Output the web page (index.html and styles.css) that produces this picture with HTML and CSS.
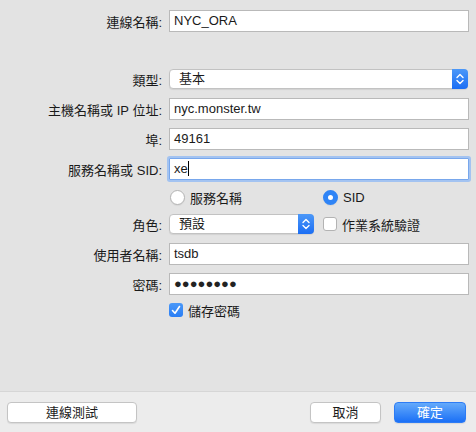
FILE: index.html
```html
<!DOCTYPE html>
<html lang="zh-Hant">
<head>
<meta charset="UTF-8">
<meta name="viewport" content="width=device-width, initial-scale=1.0">
<title>連線設定</title>
<link rel="stylesheet" href="styles.css">
</head>
<body>

<div class="dialog">
    <div class="form">
        <div class="row row-name">
            <label class="label">連線名稱:</label>
            <div class="field">NYC_ORA</div>
        </div>

        <div class="row row-select">
            <label class="label">類型:</label>
            <div class="select">
                <span class="select-text">基本</span>
                <span class="select-arrow">
                    <svg width="16" height="20" viewBox="0 0 16 20"><path d="M5 8.5 L8 5.5 L11 8.5 M5 11.5 L8 14.5 L11 11.5" fill="none" stroke="#fff" stroke-width="1.4" stroke-linecap="round" stroke-linejoin="round"/></svg>
                </span>
            </div>
        </div>

        <div class="row">
            <label class="label">主機名稱或 IP 位址:</label>
            <div class="field">nyc.monster.tw</div>
        </div>

        <div class="row">
            <label class="label">埠:</label>
            <div class="field">49161</div>
        </div>

        <div class="row row-sid">
            <label class="label">服務名稱或 SID:</label>
            <div class="field focused">xe<span class="caret"></span></div>
        </div>

        <div class="row row-radio">
            <span class="label"></span>
            <div class="options">
                <span class="option first"><span class="radio"></span>服務名稱</span>
                <span class="option"><span class="radio checked"></span>SID</span>
            </div>
        </div>

        <div class="row row-select">
            <label class="label">角色:</label>
            <div class="options">
                <div class="select small">
                    <span class="select-text">預設</span>
                    <span class="select-arrow">
                        <svg width="16" height="20" viewBox="0 0 16 20"><path d="M5 8.5 L8 5.5 L11 8.5 M5 11.5 L8 14.5 L11 11.5" fill="none" stroke="#fff" stroke-width="1.4" stroke-linecap="round" stroke-linejoin="round"/></svg>
                    </span>
                </div>
                <span class="option"><span class="checkbox"></span>作業系統驗證</span>
            </div>
        </div>

        <div class="row">
            <label class="label">使用者名稱:</label>
            <div class="field">tsdb</div>
        </div>

        <div class="row">
            <label class="label">密碼:</label>
            <div class="field password">●●●●●●●●</div>
        </div>

        <div class="row row-check">
            <span class="label"></span>
            <span class="option">
                <span class="checkbox checked">
                    <svg width="14" height="14" viewBox="0 0 14 14"><path d="M3.5 7.5 L6 10.2 L10.5 3.5" fill="none" stroke="#fff" stroke-width="1.6" stroke-linecap="round" stroke-linejoin="round"/></svg>
                </span>儲存密碼
            </span>
        </div>
    </div>

    <div class="footer">
        <button class="btn btn-test">連線測試</button>
        <div class="footer-right">
            <button class="btn btn-cancel">取消</button>
            <button class="btn btn-ok">確定</button>
        </div>
    </div>
</div>

</body>
</html>
```

FILE: styles.css
```css
body {
    margin: 0;
    padding: 0;
    font-family: "Liberation Sans", "Noto Sans CJK TC", sans-serif;
    font-size: 13px;
    color: #1a1a1a;
    background-color: #e3e3e3;
}

.dialog {
    width: 476px;
    height: 432px;
    display: flex;
    flex-direction: column;
}

.form {
    flex: 1;
    padding-top: 10px;
}

.row {
    display: flex;
    align-items: center;
    height: 22px;
    margin-bottom: 8px;
}

.row-name {
    margin-bottom: 37px;
}

.row-select {
    height: 20px;
    margin-bottom: 9px;
}

.row-sid {
    margin-top: 1px;
    margin-bottom: 9px;
}

.row-radio {
    height: 16px;
    margin-bottom: 9px;
}

.row-check {
    height: 14px;
}

.label {
    width: 162px;
    flex: none;
    text-align: right;
    margin-right: 7px;
    white-space: nowrap;
}

.field {
    width: 300px;
    height: 22px;
    box-sizing: border-box;
    border: 1px solid #b9b9b9;
    background-color: #fff;
    padding: 0 4px;
    line-height: 20px;
    white-space: nowrap;
}

.field.focused {
    border-color: #78a7ec;
    box-shadow: 0 0 0 2px #a3c3f1;
    border-radius: 1px;
}

.caret {
    display: inline-block;
    width: 1px;
    height: 15px;
    background-color: #000;
    vertical-align: -3px;
}

.field.password {
    font-size: 13px;
    color: #222;
}

.select {
    width: 299px;
    height: 20px;
    box-sizing: border-box;
    display: flex;
    border: 1px solid #c2c2c2;
    border-radius: 4px;
    background-color: #fff;
    box-shadow: 0 1px 1px rgba(0, 0, 0, 0.08);
}

.select.small {
    width: 145px;
}

.select-text {
    flex: 1;
    padding-left: 9px;
    line-height: 18px;
}

.select-arrow {
    width: 16px;
    margin: -1px -1px -1px 0;
    border-radius: 0 4px 4px 0;
    background: linear-gradient(#4c98f8, #1b6ef4);
    display: flex;
    align-items: center;
    justify-content: center;
}

.options {
    display: flex;
    align-items: center;
}

.options .select {
    margin-right: 9px;
}

.option {
    display: flex;
    align-items: center;
    white-space: nowrap;
}

.option.first {
    width: 153px;
}

.radio {
    width: 15px;
    height: 15px;
    box-sizing: border-box;
    border: 1px solid #b3b3b3;
    border-radius: 50%;
    background-color: #fff;
    margin: 0 5px 0 1px;
    box-shadow: 0 1px 1px rgba(0, 0, 0, 0.06);
}

.radio.checked {
    border: 5px solid #2f84f6;
    background-color: #fff;
}

.checkbox {
    width: 14px;
    height: 14px;
    box-sizing: border-box;
    border: 1px solid #b3b3b3;
    border-radius: 3px;
    background-color: #fff;
    margin-right: 5px;
    display: flex;
    align-items: center;
    justify-content: center;
}

.checkbox.checked {
    border: none;
    background: linear-gradient(#4a98f8, #2a7ef5);
}

.footer {
    height: 41px;
    box-sizing: border-box;
    border-top: 1px solid #d6d6d6;
    background-color: #ececec;
    display: flex;
    justify-content: space-between;
    align-items: flex-start;
    padding: 10px 10px 0 7px;
}

.footer-right {
    display: flex;
}

.btn {
    height: 21px;
    box-sizing: border-box;
    border: 1px solid #c4c4c4;
    border-radius: 4px;
    background-color: #fff;
    font-family: "Liberation Sans", "Noto Sans CJK TC", sans-serif;
    font-size: 13px;
    color: #1a1a1a;
    padding: 0;
    line-height: 19px;
    box-shadow: 0 1px 1px rgba(0, 0, 0, 0.08);
}

.btn-test {
    width: 130px;
}

.btn-cancel {
    width: 71px;
    margin-right: 13px;
}

.btn-ok {
    width: 72px;
    border-color: #2d7cf5;
    background: linear-gradient(#64aafb, #1b70f6);
    color: #fff;
}
```
